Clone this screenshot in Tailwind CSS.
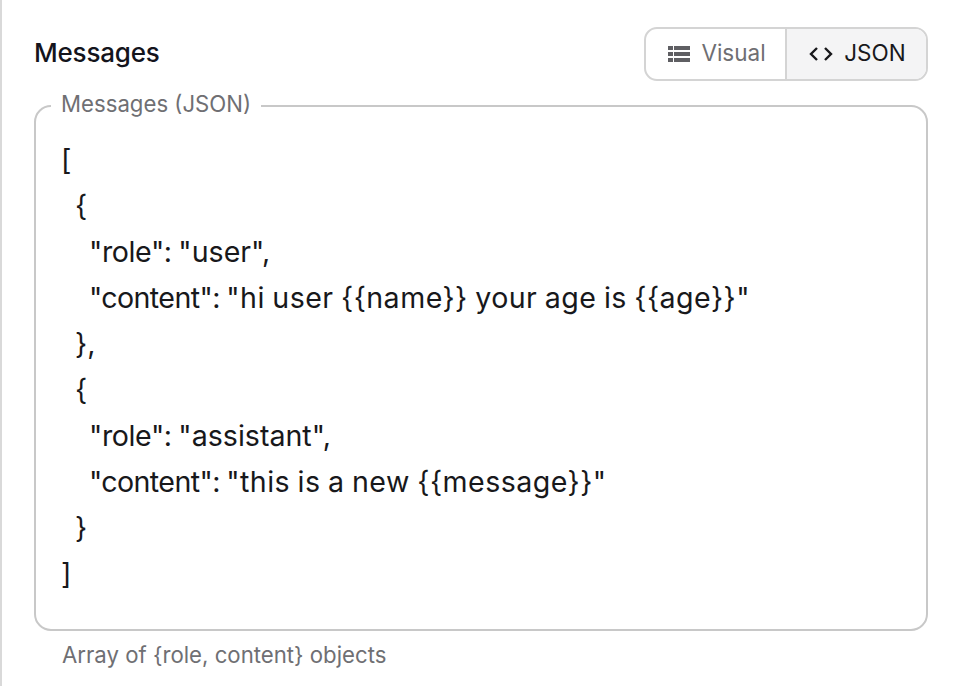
<!DOCTYPE html>
<html lang="en">
<head>
    <meta charset="UTF-8">
    <title>Messages</title>
    <script src="https://cdn.jsdelivr.net/npm/@tailwindcss/browser@4"></script>
</head>
<body class="bg-white h-[686px] overflow-hidden font-['Inter',sans-serif]">
    <div class="border-l-2 border-[#d9d9d9] h-full pl-[33px] pr-[32px] pt-[27px]">
        <!-- Header -->
        <div class="flex items-center justify-between h-[54px]">
            <h2 class="text-[26px] leading-[30px] pb-[2px] font-medium text-[#14141c] tracking-[-0.2px] -ml-px">Messages</h2>
            <div class="flex h-[54px] w-[284px] border-2 border-[#d4d4d4] rounded-[13px] overflow-hidden text-[22.5px]">
                <button class="flex-1 flex items-center justify-center pl-[3px] gap-[11px] text-[#6f6f73] border-r-2 border-[#d4d4d4]">
                    <svg class="w-[22px] h-[16px]" viewBox="0 0 22 16" fill="#5f5f63">
                        <rect x="0" y="0" width="5" height="4"/><rect x="6" y="0" width="16" height="4"/>
                        <rect x="0" y="6" width="5" height="4"/><rect x="6" y="6" width="16" height="4"/>
                        <rect x="0" y="12" width="5" height="4"/><rect x="6" y="12" width="16" height="4"/>
                    </svg>
                    <span class="pb-[2px]">Visual</span>
                </button>
                <button class="w-[139px] flex items-center justify-center pl-[2px] gap-[11px] bg-[#f4f4f5] text-[#18181b]">
                    <svg class="w-[24px] h-[16px]" viewBox="0 0 24 16" fill="none" stroke="#18181b" stroke-width="2.4">
                        <path d="M8 2 2 8l6 6M16 2l6 6-6 6"/>
                    </svg>
                    <span class="pb-[2px]">JSON</span>
                </button>
            </div>
        </div>

        <!-- Editor -->
        <fieldset class="-ml-px mt-[12px] border-2 border-[#c8c8c8] rounded-[17px] h-[538px] px-[25px]">
            <legend class="ml-[-10px] px-[10px] pb-[4px] text-[22.2px] leading-[22px] text-[#6f6f73]">Messages (JSON)</legend>
            <div class="pt-[18px] text-[28.6px] leading-[46px] [word-spacing:-1px] text-[#18181b]">
                <div>[</div>
                <div class="pl-[14px]">{</div>
                <div class="pl-[28px] flex"><span class="tracking-[-0.4px] whitespace-pre">"role": </span><span>"user",</span></div>
                <div class="pl-[28px] flex"><span class="tracking-[-0.6px] whitespace-pre">"content": </span><span class="tracking-[0.45px]">"hi user {{name}} your age is {{age}}"</span></div>
                <div class="pl-[14px]">},</div>
                <div class="pl-[14px]">{</div>
                <div class="pl-[28px] flex"><span class="tracking-[-0.4px] whitespace-pre">"role": </span><span>"assistant",</span></div>
                <div class="pl-[28px] flex"><span class="tracking-[-0.6px] whitespace-pre">"content": </span><span class="tracking-[0.45px]">"this is a new {{message}}"</span></div>
                <div class="pl-[14px]">}</div>
                <div>]</div>
            </div>
        </fieldset>
        <p class="mt-[10px] ml-[27px] text-[22.2px] leading-[28px] text-[#6f6f73]">Array of {role, content} objects</p>
    </div>
</body>
</html>
